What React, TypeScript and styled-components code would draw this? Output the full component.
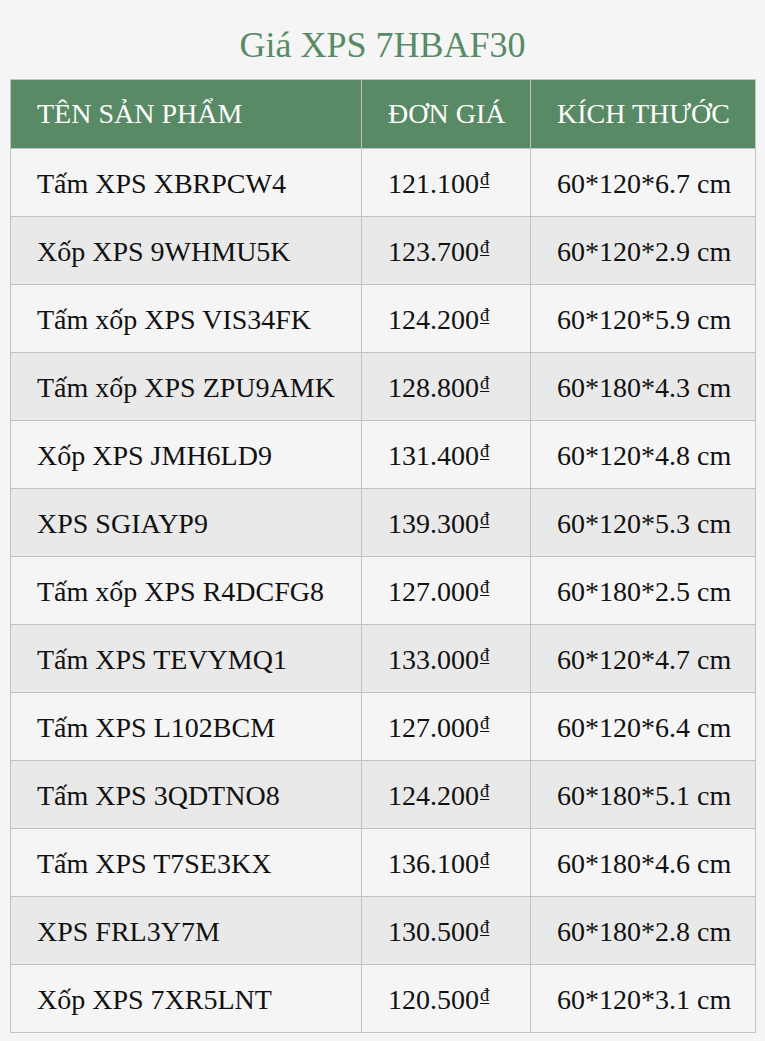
import styled, { createGlobalStyle } from "styled-components";

const GlobalStyle = createGlobalStyle`
  body {
    margin: 0;
    background-color: #f5f5f5;
    font-family: "Liberation Serif", "Times New Roman", serif;
  }
`;

const Page = styled.div`
  width: 765px;
  padding: 0 10px 10px;
  box-sizing: border-box;
`;

const Title = styled.h2`
  margin: 0;
  padding: 24px 0 13px;
  line-height: 42px;
  font-size: 36px;
  font-weight: 400;
  text-align: center;
  color: #588a65;
`;

const Table = styled.table`
  width: 745px;
  border-collapse: collapse;
  table-layout: fixed;
  border: 1px solid #c2c2c2;
`;

const HeadCell = styled.th<{ w: number }>`
  width: ${(p) => p.w}px;
  height: 69px;
  padding: 0 0 0 26px;
  box-sizing: border-box;
  background-color: #588a65;
  color: #ffffff;
  font-size: 28px;
  font-weight: 400;
  text-align: left;
  border: 1px solid #c2c2c2;
`;

const Row = styled.tr<{ alt: boolean }>`
  background-color: ${(p) => (p.alt ? "#e9e9e9" : "#f5f5f5")};
`;

const Cell = styled.td`
  height: 68px;
  padding: 2px 0 0 26px;
  box-sizing: border-box;
  color: #111111;
  font-size: 28px;
  border: 1px solid #c2c2c2;
  white-space: nowrap;
`;

const Dong = styled.span`
  font-size: 0.66em;
  vertical-align: 0.4em;
  text-decoration: underline;
  text-underline-offset: 2px;
  margin-left: 1px;
`;

const products = [
  ["Tấm XPS XBRPCW4", "121.100", "60*120*6.7 cm"],
  ["Xốp XPS 9WHMU5K", "123.700", "60*120*2.9 cm"],
  ["Tấm xốp XPS VIS34FK", "124.200", "60*120*5.9 cm"],
  ["Tấm xốp XPS ZPU9AMK", "128.800", "60*180*4.3 cm"],
  ["Xốp XPS JMH6LD9", "131.400", "60*120*4.8 cm"],
  ["XPS SGIAYP9", "139.300", "60*120*5.3 cm"],
  ["Tấm xốp XPS R4DCFG8", "127.000", "60*180*2.5 cm"],
  ["Tấm XPS TEVYMQ1", "133.000", "60*120*4.7 cm"],
  ["Tấm XPS L102BCM", "127.000", "60*120*6.4 cm"],
  ["Tấm XPS 3QDTNO8", "124.200", "60*180*5.1 cm"],
  ["Tấm XPS T7SE3KX", "136.100", "60*180*4.6 cm"],
  ["XPS FRL3Y7M", "130.500", "60*180*2.8 cm"],
  ["Xốp XPS 7XR5LNT", "120.500", "60*120*3.1 cm"],
];

function App() {
  return (
    <>
      <GlobalStyle />
      <Page>
        <Title>Giá XPS 7HBAF30</Title>
        <Table>
          <thead>
            <tr>
              <HeadCell w={351}>TÊN SẢN PHẨM</HeadCell>
              <HeadCell w={169}>ĐƠN GIÁ</HeadCell>
              <HeadCell w={225}>KÍCH THƯỚC</HeadCell>
            </tr>
          </thead>
          <tbody>
            {products.map(([name, price, size], i) => (
              <Row key={name} alt={i % 2 === 1}>
                <Cell>{name}</Cell>
                <Cell>
                  {price}
                  <Dong>đ</Dong>
                </Cell>
                <Cell>{size}</Cell>
              </Row>
            ))}
          </tbody>
        </Table>
      </Page>
    </>
  );
}

export default App;
